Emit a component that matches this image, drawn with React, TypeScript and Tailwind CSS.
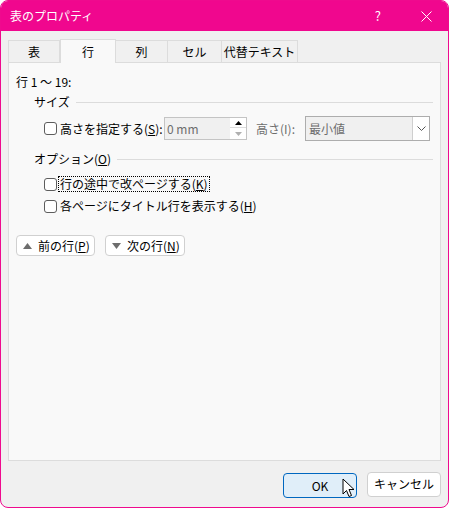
import React from "react";

const font = { fontFamily: '"Noto Sans CJK JP", "Noto Sans", sans-serif' };

const CheckBox = () => (
  <span className="inline-block w-[13px] h-[13px] shrink-0 rounded-[3px] border border-[#5d5d5d] bg-white" />
);

const Tab = ({ label, active, w }: { label: string; active?: boolean; w: string }) =>
  active ? (
    <div className={`${w} h-[24px] -mb-px relative z-10 flex items-center justify-center bg-[#f9f9f9] border border-b-0 border-[#dcdcdc] text-[12px]`}>
      {label}
    </div>
  ) : (
    <div className={`${w} h-[22px] flex items-center justify-center bg-[#f0f0f0] border border-b-0 border-l-0 first:border-l border-[#dcdcdc] text-[12px]`}>
      {label}
    </div>
  );

export default function App() {
  return (
    <div className="w-[449px] h-[508px] bg-white text-black" style={font}>
      <div className="w-full h-full flex flex-col rounded-[8px] border border-[#ef0a8e] bg-[#f0f0f0] overflow-hidden">
        {/* title bar */}
        <div className="h-[30px] shrink-0 bg-[#f0078e] flex items-center pl-[9px] text-white text-[12px]">
          <span>表のプロパティ</span>
          <span className="ml-auto mr-[40px] text-[13px]">?</span>
          <svg width="11" height="11" viewBox="0 0 11 11" className="mr-[16px]">
            <path d="M0.5 0.5 L10.5 10.5 M10.5 0.5 L0.5 10.5" stroke="white" strokeWidth="1" />
          </svg>
        </div>

        <div className="flex-1 flex flex-col px-[7px] pt-[8px]">
          {/* tabs */}
          <div className="flex items-end h-[23px]">
            <Tab label="表" w="w-[52px]" />
            <Tab label="行" w="w-[56px]" active />
            <Tab label="列" w="w-[52px]" />
            <Tab label="セル" w="w-[54px]" />
            <Tab label="代替テキスト" w="w-[76px]" />
          </div>

          {/* panel */}
          <div className="flex-1 flex flex-col bg-[#f9f9f9] border border-[#dcdcdc] px-[7px] pt-[11px] text-[12px]">
            <div className="h-[16px] leading-[16px]">行 1 ～ 19:</div>

            <div className="mt-[4px] h-[16px] pl-[18px] flex items-center gap-[6px]">
              <span>サイズ</span>
              <div className="flex-1 h-px bg-[#dcdcdc]" />
            </div>

            <div className="mt-[6px] h-[25px] pl-[28px] flex items-center">
              <CheckBox />
              <span className="w-[107px] pl-[3px]">
                高さを指定する(<u>S</u>):
              </span>
              <div className="w-[83px] h-[23px] flex border border-[#c4c4c4] bg-white">
                <div className="flex-1 bg-[#f0f0f0] text-[#6d6d6d] pl-[2px] leading-[21px]">0 mm</div>
                <div className="w-[16px] flex flex-col">
                  <div className="h-[10px] flex items-center justify-center border-b border-[#dcdcdc]">
                    <svg width="7" height="4" viewBox="0 0 7 4"><path d="M0 4 L3.5 0 L7 4 Z" fill="#000" /></svg>
                  </div>
                  <div className="flex-1 flex items-center justify-center">
                    <svg width="7" height="4" viewBox="0 0 7 4"><path d="M0 0 L3.5 4 L7 0 Z" fill="#b0b0b0" /></svg>
                  </div>
                </div>
              </div>
              <span className="ml-[9px] w-[49px] text-[#6d6d6d]">高さ(I):</span>
              <div className="w-[125px] h-[25px] flex border border-[#adadad] bg-[#f0f0f0]">
                <div className="flex-1 pl-[3px] leading-[23px] text-[#6d6d6d]">最小値</div>
                <div className="w-[17px] bg-white border-l border-[#cfcfcf] flex items-center justify-center">
                  <svg width="9" height="5" viewBox="0 0 9 5"><path d="M0.5 0.5 L4.5 4.5 L8.5 0.5" fill="none" stroke="#555" strokeWidth="1" /></svg>
                </div>
              </div>
            </div>

            <div className="mt-[10px] h-[16px] pl-[18px] flex items-center gap-[6px]">
              <span>
                オプション(<u>O</u>)
              </span>
              <div className="flex-1 h-px bg-[#dcdcdc]" />
            </div>

            <div className="mt-[7px] h-[20px] pl-[28px] flex items-center">
              <CheckBox />
              <span className="ml-[1px] px-[1px] border border-dotted border-black leading-[14px]">
                行の途中で改ページする(<u>K</u>)
              </span>
            </div>
            <div className="mt-[2px] h-[20px] pl-[28px] flex items-center">
              <CheckBox />
              <span className="pl-[3px]">
                各ページにタイトル行を表示する(<u>H</u>)
              </span>
            </div>

            <div className="mt-[19px] flex gap-[10px]">
              <button className="w-[79px] h-[21px] flex items-center gap-[6px] pl-[6px] rounded-[4px] border border-[#d0d0d0] bg-white text-[12px]">
                <svg width="9" height="6" viewBox="0 0 9 6"><path d="M0 6 L4.5 0 L9 6 Z" fill="#6d6d6d" /></svg>
                <span>
                  前の行(<u>P</u>)
                </span>
              </button>
              <button className="w-[80px] h-[21px] flex items-center gap-[6px] pl-[6px] rounded-[4px] border border-[#d0d0d0] bg-white text-[12px]">
                <svg width="9" height="6" viewBox="0 0 9 6"><path d="M0 0 L4.5 6 L9 0 Z" fill="#6d6d6d" /></svg>
                <span>
                  次の行(<u>N</u>)
                </span>
              </button>
            </div>
          </div>

          {/* footer */}
          <div className="pt-[11px] pb-[9px] flex justify-end gap-[10px]">
            <div className="relative">
              <button className="w-[74px] h-[25px] rounded-[4px] border border-[#0067c0] bg-[#e0eef9] text-[12px]">OK</button>
              <svg width="14" height="21" viewBox="0 0 14 21" className="absolute left-[59px] top-[6px]">
                <path d="M1 1 L1 16 L4.5 12.5 L7 18.5 L9.5 17.5 L7 11.5 L12 11.5 Z" fill="white" stroke="black" strokeWidth="1" strokeLinejoin="round" />
              </svg>
            </div>
            <button className="w-[74px] h-[25px] rounded-[4px] border border-[#d0d0d0] bg-white text-[12px]">キャンセル</button>
          </div>
        </div>
      </div>
    </div>
  );
}
